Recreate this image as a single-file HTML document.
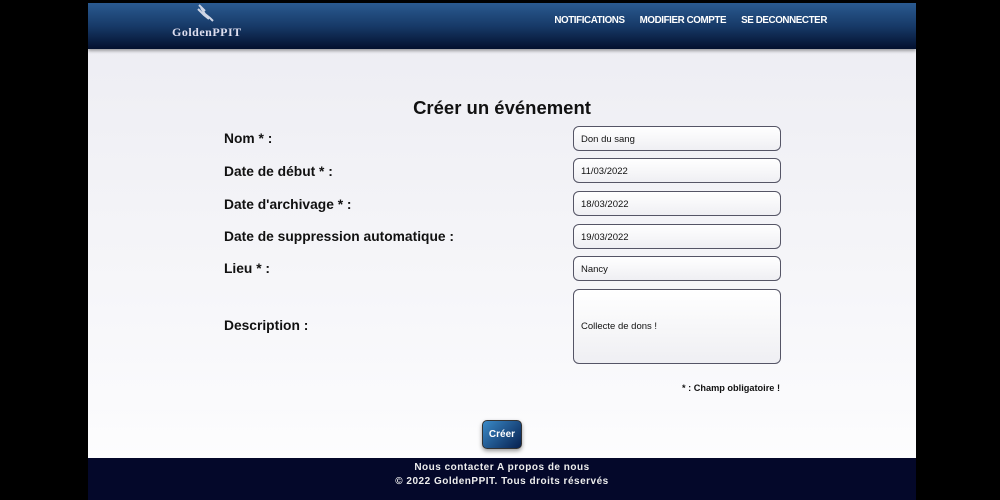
<!DOCTYPE html>
<html><head><meta charset="utf-8"><style>
*{margin:0;padding:0;box-sizing:border-box}
body{width:1000px;height:500px;background:#000;font-family:"Liberation Sans",sans-serif;position:relative;overflow:hidden}
#page{position:absolute;left:88px;top:3px;width:828px;height:497px;background:linear-gradient(#ececf2,#fafafc 80%,#fff)}
#hdr{position:absolute;left:0;top:0;width:828px;height:46px;background:linear-gradient(#2a5a90,#173a68 50%,#03102e);box-shadow:0 2px 3px rgba(0,0,0,.35)}
#logo{position:absolute;left:84px;top:22px;color:#dde;font-family:"Liberation Serif",serif;font-weight:bold;font-size:12px;letter-spacing:.5px}
#nav{position:absolute;top:12px;right:89px;color:#fff;font-weight:bold;font-size:9.8px;letter-spacing:-.4px}
#nav span{margin-left:15px}
h1{position:absolute;top:94px;left:0;width:828px;text-align:center;font-size:18.5px;color:#111;font-weight:bold}
.l{position:absolute;left:136px;font-size:13.8px;font-weight:bold;color:#111}
.i{position:absolute;left:485px;width:208px;height:25px;border:1.5px solid #556;border-radius:6px;background:linear-gradient(#fff,#efeff3);font-size:9.5px;color:#111;padding:7px 0 0 7px}
#req{position:absolute;left:594px;top:380px;font-size:9.2px;font-weight:bold;color:#111}
#btn{position:absolute;left:394px;top:417px;width:40px;height:29px;border-radius:5px;background:linear-gradient(135deg,#3a8ac8,#062050);border:1px solid #333;color:#fff;font-size:10px;font-weight:bold;text-align:center;line-height:27px;box-shadow:0 2px 4px rgba(0,0,0,.4)}
#ftr{position:absolute;left:0;top:455px;width:828px;height:42px;background:#04082a;color:#eee;font-weight:bold;font-size:10px;text-align:center;line-height:13.5px;padding-top:3px;letter-spacing:.5px}
</style></head><body>
<div id="page">
<div id="hdr">
<svg style="position:absolute;left:107px;top:1px" width="22" height="20" viewBox="0 0 22 20"><path d="M4 1l6 6M6 4l4 6l5 4l3 3M3 5l6 6l5 4" stroke="#cfd6e6" stroke-width="2" fill="none"/></svg>
<div id="logo">GoldenPPIT</div>
<div id="nav"><span>NOTIFICATIONS</span><span>MODIFIER COMPTE</span><span>SE DECONNECTER</span></div>
</div>
<h1>Créer un événement</h1>
<div class="l" style="top:128px">Nom * :</div>
<div class="l" style="top:161px">Date de début * :</div>
<div class="l" style="top:194px">Date d'archivage * :</div>
<div class="l" style="top:226px">Date de suppression automatique :</div>
<div class="l" style="top:258px">Lieu * :</div>
<div class="l" style="top:315px">Description :</div>
<div class="i" style="top:123px">Don du sang</div>
<div class="i" style="top:155px">11/03/2022</div>
<div class="i" style="top:188px">18/03/2022</div>
<div class="i" style="top:221px">19/03/2022</div>
<div class="i" style="top:253px">Nancy</div>
<div class="i" style="top:286px;height:75px;padding-top:31px">Collecte de dons !</div>
<div id="req">* : Champ obligatoire !</div>
<div id="btn">Créer</div>
<div id="ftr">Nous contacter A propos de nous<br>© 2022 GoldenPPIT. Tous droits réservés</div>
</div>
</body></html>
